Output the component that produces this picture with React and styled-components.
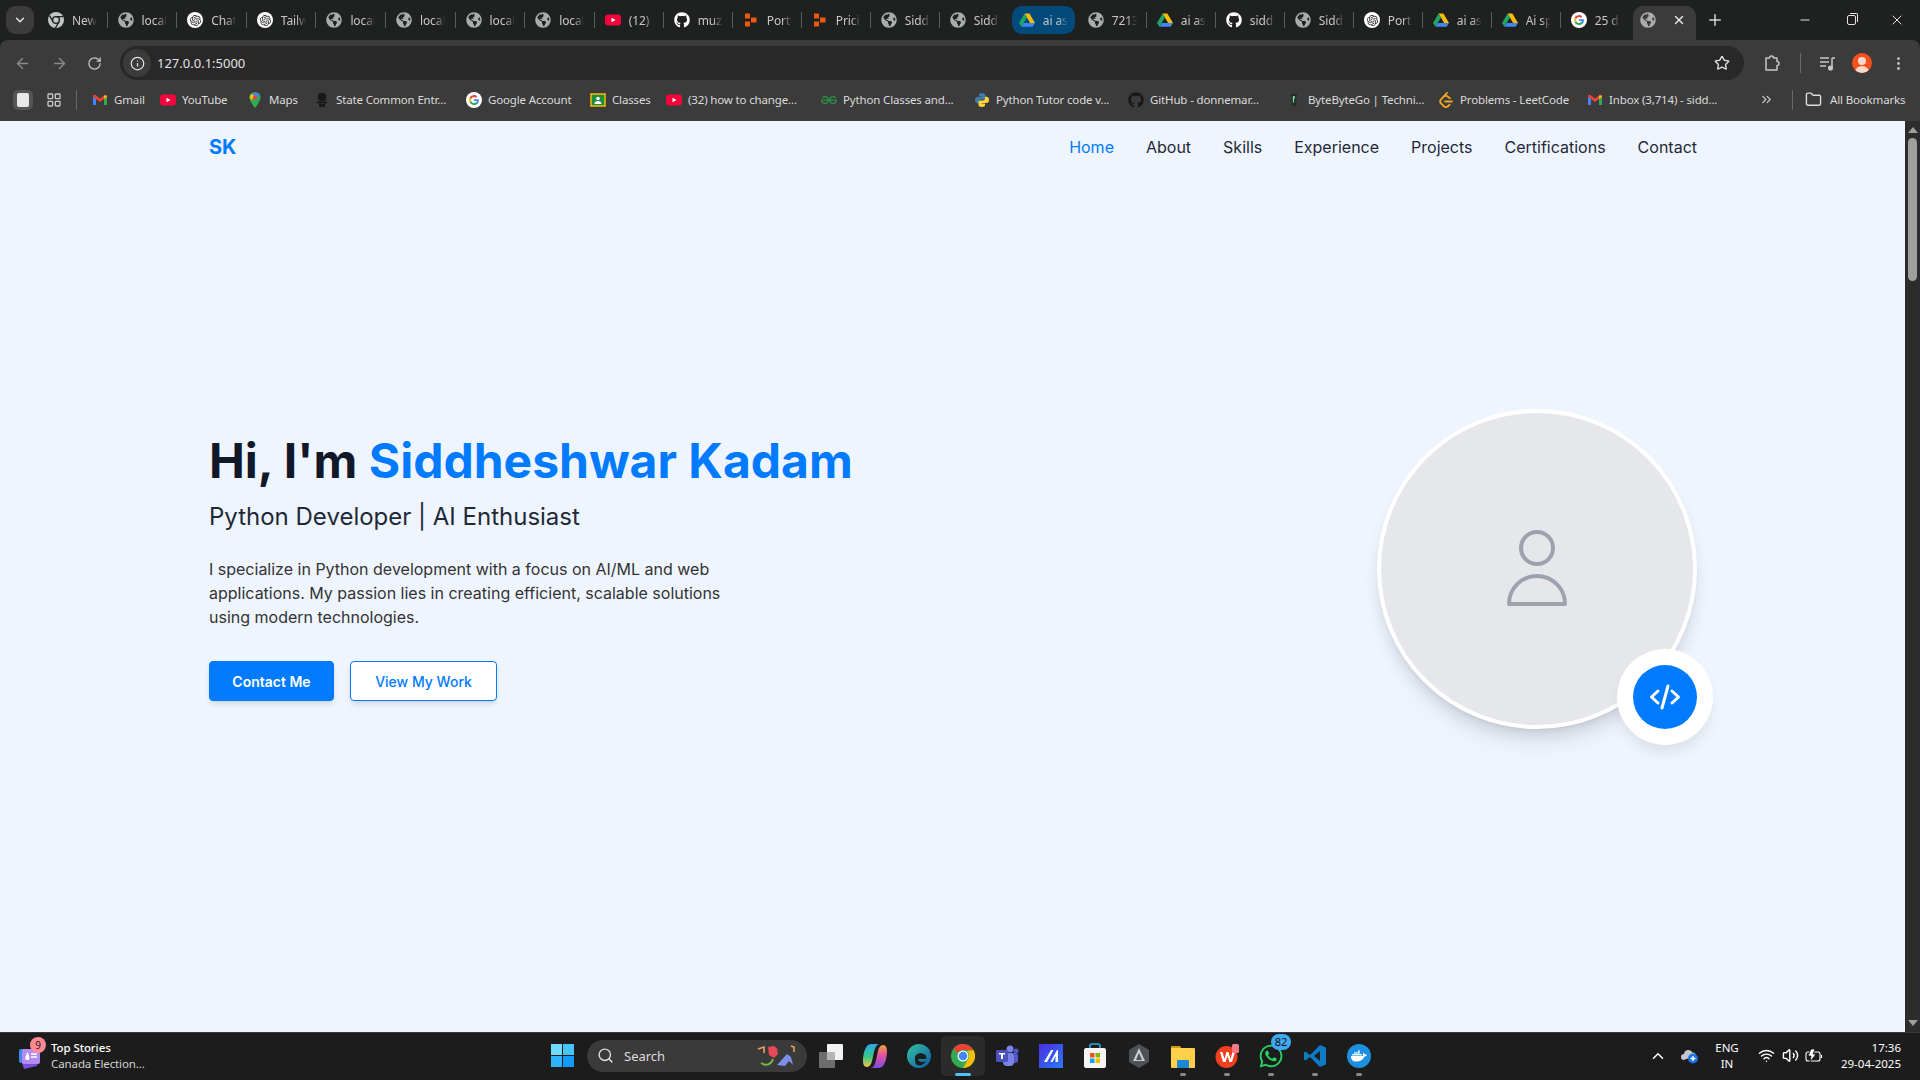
import React from "react";
import styled, { createGlobalStyle } from "styled-components";
import {
  ArrowLeft, ArrowRight, RotateCw, Info, Star, EllipsisVertical, ChevronDown, ChevronsRight,
  Folder, Plus, Minus, X, ChevronUp, Search, Wifi, Volume2, LayoutGrid,
} from "lucide-react";
import { FaGithub, FaGlobeAmericas, FaDocker, FaWhatsapp } from "react-icons/fa";
import { SiOpenai, SiLeetcode, SiGeeksforgeeks } from "react-icons/si";

const Global = createGlobalStyle`
  html, body { margin: 0; padding: 0; height: 100%; overflow: hidden; background: #1c1c1c; }
  * { box-sizing: border-box; }
  #root { height: 100%; }
`;

const UI = `"Noto Sans", "Open Sans", sans-serif`;
const WEB = `Inter, "Liberation Sans", sans-serif`;

/* ---------- favicons & logos ---------- */
const GlobeIcon = ({ s = 16 }) => <FaGlobeAmericas size={s} color="#a9abad" />;
const ChromeMono = () => (
  <svg width="16" height="16" viewBox="0 0 16 16">
    <circle cx="8" cy="8" r="8" fill="#c4c7c5" />
    <circle cx="8" cy="8" r="3.4" fill="#c4c7c5" stroke="#1f2020" strokeWidth="1.4" />
    <path d="M8 4.6h7M5 9.8 1.6 3.6M11 9.8 7.4 15.8" stroke="#1f2020" strokeWidth="1.3" />
  </svg>
);
const ChatIcon = () => (
  <svg width="16" height="16" viewBox="0 0 16 16">
    <circle cx="8" cy="8" r="8" fill="#fff" />
    <foreignObject x="2.5" y="2.5" width="11" height="11"><SiOpenai size={11} color="#222" /></foreignObject>
  </svg>
);
const YouTubeIcon = () => (
  <svg width="16" height="16" viewBox="0 0 16 16">
    <rect y="2.5" width="16" height="11" rx="3" fill="#f4043b" />
    <path d="M6.5 5.7 10.5 8l-4 2.3z" fill="#fff" />
  </svg>
);
const GitIcon = () => <FaGithub size={16} color="#fff" />;
const PortIcon = () => (
  <svg width="16" height="16" viewBox="0 0 16 16" fill="#ee5a0a">
    <rect x="2" y="1.5" width="5" height="5" /><rect x="8" y="5.5" width="5.5" height="5" /><rect x="2" y="9.5" width="5" height="5" />
  </svg>
);
const DriveIcon = () => (
  <svg width="16" height="16" viewBox="0 0 16 16">
    <path d="M5.6 1.5h4.8L16 11h-4.9z" fill="#fbbc04" />
    <path d="M5.6 1.5 0 11l2.4 3.8L8 5.5z" fill="#1fa463" />
    <path d="M4.8 11H16l-2.4 3.8H2.4z" fill="#4285f4" />
  </svg>
);
const GoogleIcon = () => (
  <svg width="16" height="16" viewBox="0 0 16 16">
    <circle cx="8" cy="8" r="8" fill="#fff" />
    <path d="M12.9 8.2c0-.4 0-.7-.1-1H8v1.9h2.8c-.1.7-.5 1.2-1 1.6l1.6 1.2c.9-.9 1.5-2.1 1.5-3.7z" fill="#4285f4" />
    <path d="M8 13c1.4 0 2.5-.5 3.4-1.3l-1.6-1.2c-.5.3-1 .5-1.8.5-1.3 0-2.4-.9-2.8-2.1L3.5 10.1C4.3 11.8 6 13 8 13z" fill="#34a853" />
    <path d="M5.2 8.9a3 3 0 0 1 0-1.9L3.5 5.8a5 5 0 0 0 0 4.3z" fill="#fbbc04" />
    <path d="M8 5c.8 0 1.4.3 1.9.8l1.4-1.4A5 5 0 0 0 3.5 5.8L5.2 7C5.6 5.8 6.7 5 8 5z" fill="#ea4335" />
  </svg>
);
const GmailIcon = () => (
  <svg width="16" height="16" viewBox="0 0 16 16">
    <path d="M1 4v9h3V7z" fill="#4285f4" /><path d="M15 4v9h-3V7z" fill="#34a853" />
    <path d="M1 4.5C1 3 2.6 2.4 3.7 3.2L8 6.5l4.3-3.3C13.4 2.4 15 3 15 4.5L12 7 8 10 4 7z" fill="#ea4335" />
    <path d="M12 3.4 15 3.8V5l-3 2z" fill="#fbbc04" />
  </svg>
);
const MapsIcon = () => (
  <svg width="16" height="16" viewBox="0 0 16 16">
    <path d="M8 0a5.5 5.5 0 0 0-5.5 5.5C2.5 9.5 8 16 8 16s5.500-6.500 5.500-10.500A5.500 5.500 0 0 0 8 0z" fill="#34a853" />
    <path d="M12.800 2.800 8 8 4 3a5.500 5.500 0 0 1 8.800-.2z" fill="#4285f4" />
    <path d="M4 1.800 2.500 5.500 4.500 8 8 4z" fill="#fbbc04" />
    <circle cx="8" cy="5.500" r="2" fill="#ea4335" />
  </svg>
);
const EmblemIcon = () => (
  <svg width="16" height="16" viewBox="0 0 16 16" fill="#17181a">
    <rect x="4" y="1" width="8" height="8" rx="3" /><rect x="3" y="9.500" width="10" height="2" /><rect x="5" y="12" width="6" height="3" />
  </svg>
);
const ClassroomIcon = () => (
  <svg width="16" height="16" viewBox="0 0 16 16">
    <rect x="1" y="2" width="14" height="12" fill="#1e8e3e" stroke="#fbbc04" strokeWidth="1.500" />
    <circle cx="8" cy="6.500" r="1.800" fill="#fff" /><path d="M4.500 12c0-2 1.500-3 3.500-3s3.500 1 3.500 3z" fill="#fff" />
  </svg>
);
const PythonIcon = () => (
  <svg width="16" height="16" viewBox="0 0 16 16">
    <path d="M8 1C5.500 1 5 2 5 3v1.500h3.200V5H3.500C2 5 1 6 1 8s1 3.200 2.400 3.200H5V9.500C5 8.300 6 7.500 7 7.500h3c1 0 1.500-.7 1.500-1.500V3c0-1-1.200-2-3.500-2z" fill="#3f7cad" />
    <path d="M8 15c2.500 0 3-1 3-2v-1.500H7.800V11h4.700C14 11 15 10 15 8s-1-3.200-2.400-3.200H11v1.700c0 1.200-1 2-2 2H6c-1 0-1.500.7-1.500 1.500v3c0 1 1.200 2 3.500 2z" fill="#ffd43b" />
  </svg>
);
const GfgIcon = () => <SiGeeksforgeeks size={16} color="#2f8d46" />;
const GhDark = () => <FaGithub size={16} color="#17181a" />;
const ByteIcon = () => (
  <svg width="16" height="16" viewBox="0 0 16 16">
    <path d="M5 2h6l-1 12H6z" fill="#21302c" /><path d="M7 4c2-.5 2.500 1 1.500 2.500S8.500 10 7.800 11 6.500 6 7 4z" fill="#7ee0a8" />
  </svg>
);
const LeetIcon = () => <SiLeetcode size={16} color="#f5a623" />;

const favicons = {
  chrome: ChromeMono, globe: GlobeIcon, chat: ChatIcon, yt: YouTubeIcon, gh: GitIcon, port: PortIcon, drive: DriveIcon, google: GoogleIcon,
};

/* ---------- browser chrome ---------- */
const Screen = styled.div`
  width: 1920px; height: 1080px; display: flex; flex-direction: column; overflow: hidden; font-family: ${UI};
`;
const TabStrip = styled.div`
  height: 40px; flex: none; background: #1f2020; display: flex; align-items: flex-start; position: relative;
`;
const TabMenu = styled.div`
  width: 28px; height: 28px; margin: 6px 4px 0 6px; flex: none; border-radius: 9px; background: #3b3b3b; color: #e3e3e3;
  display: flex; align-items: center; justify-content: center;
`;
const Tab = styled.div`
  width: ${(p) => p.$w}px; height: 28px; margin-top: 6px; flex: none; padding-left: 10px;
  display: flex; align-items: center; gap: 8px; position: relative; color: #c7c7c7; font-size: 12px; letter-spacing: -.1px;
  &::after {
    content: ""; position: absolute; right: 0; top: 6px; height: 16px; width: 1px;
    background: ${(p) => (p.$sep ? "#5b5c5d" : "transparent")};
  }
`;
const GroupTab = styled.div`
  width: 63px; height: 28px; margin: 6px 3px 0; flex: none; padding-left: 7px; display: flex; align-items: center; gap: 8px;
  color: #c7c7c7; font-size: 12px; letter-spacing: -.1px; background: #024a7a; border-radius: 10px;
`;
const CurrentTab = styled.div`
  width: 63px; height: 34px; margin: 6px 3px 0; flex: none; padding: 0 0 6px 7px; display: flex; align-items: center;
  background: #3b3b3b; border-radius: 10px 10px 0 0;
`;
const TabIcon = styled.span`
  width: 16px; height: 16px; flex: none; display: flex; align-items: center; justify-content: center;
  & foreignObject svg { display: block; }
`;
const TabTitle = styled.span`
  width: 25px; overflow: hidden; white-space: nowrap; display: block;
  -webkit-mask-image: linear-gradient(90deg, #000 60%, transparent);
  mask-image: linear-gradient(90deg, #000 60%, transparent);
`;
const TabClose = styled.span`
  margin-left: 16px; display: flex; color: #e3e3e3;
`;
const NewTab = styled.div`
  width: 28px; height: 28px; margin: 6px 0 0 2px; display: flex; align-items: center; justify-content: center; color: #d6d6d6; flex: none;
`;
const WindowControls = styled.div`
  margin-left: auto; display: flex; height: 40px; align-items: center; color: #e3e3e3;
`;
const WinButton = styled.div`
  width: 46px; height: 40px; display: flex; align-items: center; justify-content: center;
`;
const RestoreGlyph = styled.span`
  width: 9px; height: 10px; border: 1px solid #e3e3e3; border-radius: 2px; position: relative; display: block;
  &::before { content: ""; position: absolute; top: -3px; right: -3px; width: 7px; height: 8px; border-top: 1px solid #e3e3e3; border-right: 1px solid #e3e3e3; border-radius: 0 2px 0 0; }
`;

const Toolbar = styled.div`
  height: 40px; flex: none; background: #3b3b3b; border-radius: 8px 8px 0 0; display: flex; align-items: center; color: #c7c7c7; padding-top: 6px;
`;
const NavIcon = styled.div`
  width: ${(p) => p.$w}px; flex: none; display: flex; justify-content: center; color: ${(p) => (p.$dim ? "#8a8a8a" : "#c7c7c7")};
`;
const AddressBar = styled.div`
  width: 1624px; height: 34px; flex: none; margin: 0 0 0 6px; border-radius: 17px; background: #282828; display: flex; align-items: center; padding-left: 3px; color: #e3e3e3; font-size: 13px;
`;
const InfoChip = styled.div`
  width: 28px; height: 28px; border-radius: 50%; background: #3b3b3b; display: flex; align-items: center; justify-content: center; margin-right: 6px;
`;
const StarSlot = styled.div`
  margin-left: auto; margin-right: 14px; display: flex;
`;
const ToolSep = styled.div`
  width: 1px; height: 20px; background: #6a6a6a; flex: none;
`;
const Avatar = styled.div`
  width: 20px; height: 20px; border-radius: 50%; background: #f4511e; position: relative; overflow: hidden; flex: none;
  &::before { content: ""; position: absolute; left: 6px; top: 4px; width: 8px; height: 8px; border-radius: 50%; background: #ffd9c9; }
  &::after { content: ""; position: absolute; left: 3px; top: 13px; width: 14px; height: 12px; border-radius: 50%; background: #ffd9c9; }
`;

const BookmarkBar = styled.div`
  height: 41px; flex: none; background: #3b3b3b; display: flex; align-items: center; color: #dcdcdc; font-size: 11.5px; padding: 0 0 2px 13px; letter-spacing: -.15px;
`;
const PinSquare = styled.div`
  width: 20px; height: 20px; border-radius: 5px; background: #555; display: flex; align-items: center; justify-content: center; flex: none;
  &::before { content: ""; width: 12px; height: 14px; border-radius: 2px; background: #e8e8e8; }
`;
const AppsSlot = styled.div`
  margin-left: 13px; width: 16px; display: flex; color: #c7c7c7; flex: none;
`;
const BarSep = styled.div`
  width: 1px; height: 20px; background: #666; flex: none; margin: ${(p) => p.$m || "0 15px 0 14px"};
`;
const Bookmark = styled.div`
  width: ${(p) => p.$w}px; flex: none; display: flex; align-items: center; gap: ${(p) => p.$gap || 6}px; white-space: nowrap; overflow: hidden;
`;

/* ---------- page ---------- */
const Viewport = styled.div`
  height: 911px; flex: none; display: flex;
`;
const Page = styled.main`
  flex: 1; min-width: 0; background: #eff5ff; color: #1f2937; font-family: ${WEB}; display: flex; flex-direction: column;
`;
const Header = styled.header`
  height: 52px; flex: none; display: flex; align-items: center; justify-content: space-between; padding: 0 208px 0 209px;
`;
const Logo = styled.div`
  font-size: 20px; font-weight: 700; color: #007bff;
`;
const NavList = styled.nav`
  display: flex; gap: 32px; font-size: 16px; font-weight: 400;
`;
const NavLink = styled.a`
  color: ${(p) => (p.$active ? "#007bff" : "#1f2937")};
`;
const Hero = styled.section`
  flex: 1; display: flex; align-items: flex-start; justify-content: space-between; padding: 236px 208px 0 209px;
`;
const HeroText = styled.div`
  padding-top: 23px; display: flex; flex-direction: column;
`;
const Title = styled.h1`
  margin: 0 0 11px; font-size: 48px; line-height: 58px; font-weight: 700; color: #111827;
`;
const Accent = styled.span`
  color: #007bff;
`;
const Subtitle = styled.h2`
  margin: 0 0 24px; font-size: 24px; line-height: 32px; font-weight: 400; color: #1f2937;
`;
const Lead = styled.p`
  margin: 0 0 32px; width: 540px; font-size: 16px; line-height: 24px; color: #333;
`;
const Actions = styled.div`
  display: flex; gap: 16px;
`;
const Button = styled.a`
  height: 40px; width: ${(p) => p.$w}px; display: flex; align-items: center; justify-content: center; border-radius: 4px; font-size: 14px;
  font-weight: ${(p) => (p.$primary ? 600 : 500)};
  color: ${(p) => (p.$primary ? "#fff" : "#007bff")};
  background: ${(p) => (p.$primary ? "#007bff" : "#fff")};
  border: 1px solid #007bff;
  box-shadow: 0 4px 6px -1px rgba(0,0,0,.1), 0 2px 4px -2px rgba(0,0,0,.1);
`;
const Portrait = styled.div`
  width: 320px; height: 320px; flex: none; position: relative; border-radius: 50%; background: #e5e7eb; border: 4px solid #fff;
  box-shadow: 0 10px 15px -3px rgba(0,0,0,.1), 0 4px 6px -4px rgba(0,0,0,.1), 0 20px 25px -5px rgba(0,0,0,.06);
  display: flex; align-items: center; justify-content: center;
`;
const Badge = styled.div`
  position: absolute; right: -4px; bottom: -4px; width: 64px; height: 64px; border-radius: 50%; background: #007bff;
  box-shadow: 0 0 0 16px #fff, 0 10px 15px 12px rgba(0,0,0,.1);
  display: flex; align-items: center; justify-content: center;
`;

const ScrollRail = styled.div`
  width: 15px; flex: none; background: #2c2c2c; display: flex; flex-direction: column; align-items: center; padding-top: 6px; position: relative;
`;
const ScrollUp = styled.div`
  width: 0; height: 0; border-left: 5px solid transparent; border-right: 5px solid transparent; border-bottom: 6px solid #9f9f9f; margin-bottom: 5px;
`;
const ScrollThumb = styled.div`
  width: 9px; height: 143px; border-radius: 5px; background: #9f9f9f;
`;
const ScrollDown = styled.div`
  margin-top: auto; margin-bottom: 6px; width: 0; height: 0; border-left: 5px solid transparent; border-right: 5px solid transparent; border-top: 6px solid #9f9f9f;
`;

/* ---------- taskbar ---------- */
const Taskbar = styled.footer`
  flex: 1; background: #1c1c1c; border-top: 1px solid #3a3a3a; display: flex; align-items: center; position: relative; color: #fff; font-size: 12px; padding-bottom: 2px;
`;
const Widget = styled.div`
  width: 551px; flex: none; display: flex; align-items: center; padding-left: 19px; gap: 11px; position: relative;
`;
const WidgetBadge = styled.span`
  position: absolute; left: 30px; top: -3px; width: 16px; height: 16px; border-radius: 50%; background: #ff8a94; color: #1c1c1c;
  font-size: 10px; display: flex; align-items: center; justify-content: center;
`;
const WidgetText = styled.div`
  display: flex; flex-direction: column; font-size: 11.5px; line-height: 16px; letter-spacing: -.1px;
`;
const WidgetHead = styled.span`
  font-weight: 500;
`;
const WidgetSub = styled.span`
  color: #d4d4d4;
`;
const StartGrid = styled.div`
  width: 23px; height: 23px; flex: none; display: grid; grid-template-columns: 1fr 1fr; gap: 1px;
`;
const StartPane = styled.span`
  background: ${(p) => p.$c};
`;
const SearchPill = styled.div`
  width: 220px; height: 32px; margin-left: 13px; flex: none; border-radius: 16px; background: #3a3a3a; display: flex; align-items: center; padding-left: 10px; gap: 10px; color: #dcdcdc; font-size: 13px; position: relative;
`;
const SearchArt = styled.div`
  position: absolute; right: 8px; top: 5px; display: flex;
`;
const TaskIcons = styled.div`
  display: flex; margin-left: 2px; flex: none;
`;
const TaskSlot = styled.div`
  width: 44px; height: 40px; display: flex; align-items: center; justify-content: center; position: relative; flex: none;
  border-radius: 5px;
  background: ${(p) => (p.$active ? "#2b2b2b" : "transparent")};
  &::after {
    content: ""; position: absolute; bottom: 0; left: 50%; transform: translateX(-50%); border-radius: 2px; height: 3px;
    width: ${(p) => (p.$active ? "16px" : p.$open ? "6px" : "0")};
    background: ${(p) => (p.$active ? "#4fc3f7" : "#8a8a8a")};
  }
`;
const CountBadge = styled.span`
  position: absolute; right: 2px; top: -2px; width: 20px; height: 16px; border-radius: 8px; background: #3fa9f5; color: #111; font-size: 11px; display: flex; align-items: center; justify-content: center;
`;
const Tray = styled.div`
  margin-left: auto; display: flex; align-items: center; padding-right: 19px; color: #fff;
`;
const TraySlot = styled.div`
  width: ${(p) => p.$w}px; display: flex; justify-content: center; flex: none;
`;
const Lang = styled.div`
  display: flex; flex-direction: column; align-items: center; font-size: 11.5px; line-height: 16px; width: 40px; margin-right: 6px;
`;
const Clock = styled.div`
  display: flex; flex-direction: column; align-items: flex-end; font-size: 11.5px; line-height: 16px; margin-left: 4px; width: 70px;
`;

const tabs = [
  ["chrome", "New"], ["globe", "local"], ["chat", "Chat"], ["chat", "Tailw"], ["globe", "local"], ["globe", "local"], ["globe", "local"], ["globe", "local"],
  ["yt", "(12)"], ["gh", "muz"], ["port", "Port"], ["port", "Prici"], ["globe", "Sidd"], ["globe", "Sidd"], ["drive", "ai as", "group"], ["globe", "7213"],
  ["drive", "ai as"], ["gh", "sidd"], ["globe", "Sidd"], ["chat", "Port"], ["drive", "ai as"], ["drive", "Ai sp"], ["google", "25 d"],
];

const bookmarks = [
  [GmailIcon, "Gmail", 68], [YouTubeIcon, "YouTube", 87], [MapsIcon, "Maps", 67], [EmblemIcon, "State Common Entr...", 152],
  [GoogleIcon, "Google Account", 124], [ClassroomIcon, "Classes", 76], [YouTubeIcon, "(32) how to change...", 155],
  [GfgIcon, "Python Classes and...", 153], [PythonIcon, "Python Tutor code v...", 154], [GhDark, "GitHub - donnemar...", 158],
  [ByteIcon, "ByteByteGo | Techni...", 152], [LeetIcon, "Problems - LeetCode", 149], [GmailIcon, "Inbox (3,714) - sidd...", 165],
];

const TaskView = () => (
  <svg width="26" height="26" viewBox="0 0 26 26">
    <rect x="1" y="9" width="16" height="16" rx="1" fill="#6d6d6d" /><rect x="9" y="1" width="16" height="16" rx="1" fill="#f2f2f2" /><rect x="9" y="9" width="8" height="8" fill="#b5b5b5" />
  </svg>
);
const Copilot = () => (
  <svg width="24" height="26" viewBox="0 0 24 26">
    <defs>
      <linearGradient id="cpa" x1="0" y1="0" x2="0" y2="1"><stop offset="0" stopColor="#2fa4f0" /><stop offset=".55" stopColor="#37c98a" /><stop offset="1" stopColor="#f5c542" /></linearGradient>
      <linearGradient id="cpb" x1="0" y1="0" x2="0" y2="1"><stop offset="0" stopColor="#f0a53a" /><stop offset=".45" stopColor="#e64fa3" /><stop offset="1" stopColor="#7a4fe0" /></linearGradient>
    </defs>
    <path d="M8 1h8c-3 1-4 4-5 8l-2 9c-.7 3-2.500 6-5 6-3 0-4-3-4-6 0-6 2-17 8-17z" fill="url(#cpa)" />
    <path d="M16 25H8c3-1 4-4 5-8l2-9c.7-3 2.500-6 5-6 3 0 4 3 4 6 0 6-2 17-8 17z" fill="url(#cpb)" />
  </svg>
);
const Edge = () => (
  <svg width="24" height="24" viewBox="0 0 24 24">
    <defs><linearGradient id="ed" x1="0" y1="0" x2="1" y2="1"><stop offset="0" stopColor="#35c1a0" /><stop offset="1" stopColor="#0c59a4" /></linearGradient></defs>
    <circle cx="12" cy="12" r="12" fill="url(#ed)" /><path d="M8 14c0-4 5-6 9-4 2 1 3 3 2 5h-8c.5 3 5 4 8 2-2 4-7 6-10 3-1-2-1-4-1-6z" fill="#1c1c1c" />
  </svg>
);
const Chrome = () => (
  <svg width="24" height="24" viewBox="0 0 24 24">
    <circle cx="12" cy="12" r="12" fill="#34a853" />
    <path d="M12 0a12 12 0 0 1 10.4 6H12a6 6 0 0 0-5.300 3.200L2.500 4.500A12 12 0 0 1 12 0z" fill="#ea4335" />
    <path d="M22.400 6A12 12 0 0 1 12 24l5.200-9A6 6 0 0 0 16 7z" fill="#fbbc04" />
    <circle cx="12" cy="12" r="5.500" fill="#fff" /><circle cx="12" cy="12" r="4.300" fill="#4285f4" />
  </svg>
);
const Teams = () => (
  <svg width="24" height="24" viewBox="0 0 24 24">
    <circle cx="15" cy="5" r="3.500" fill="#7b83eb" /><circle cx="21" cy="7" r="2.500" fill="#5059c9" /><rect x="11" y="9" width="12" height="10" rx="3" fill="#5059c9" /><rect x="8" y="9" width="11" height="13" rx="4" fill="#7b83eb" />
    <rect x="1" y="6" width="12" height="12" rx="1.500" fill="#4b53bc" /><path d="M4 9h6v1.500H8V15H6v-4.500H4z" fill="#fff" />
  </svg>
);
const AppTile = () => (
  <svg width="24" height="24" viewBox="0 0 24 24">
    <defs><linearGradient id="tl" x1="0" y1="0" x2="1" y2="1"><stop offset="0" stopColor="#4a2ee0" /><stop offset="1" stopColor="#2a7af5" /></linearGradient></defs>
    <rect width="24" height="24" fill="url(#tl)" /><path d="M5 18 12 6h2.500L8 18zM11.500 18 18 6h1v12h-2.500v-6L13.500 18z" fill="#fff" />
  </svg>
);
const Store = () => (
  <svg width="24" height="26" viewBox="0 0 24 26">
    <path d="M7 6V3a2 2 0 0 1 2-2h6a2 2 0 0 1 2 2v3" fill="none" stroke="#28a8ea" strokeWidth="1.600" />
    <rect x="1" y="5" width="22" height="20" rx="2" fill="#f4f4f4" />
    <rect x="7" y="10" width="4.500" height="4.500" fill="#f25022" /><rect x="12.500" y="10" width="4.500" height="4.500" fill="#7fba00" /><rect x="7" y="15.500" width="4.500" height="4.500" fill="#00a4ef" /><rect x="12.500" y="15.500" width="4.500" height="4.500" fill="#ffb900" />
  </svg>
);
const HexApp = () => (
  <svg width="22" height="24" viewBox="0 0 22 24">
    <path d="M11 0 21 6v12L11 24 1 18V6z" fill="#4d5257" /><path d="M11 4 17 17H5z" fill="#c8ccd0" /><path d="M11 9 14 16H8z" fill="#4d5257" />
  </svg>
);
const Files = () => (
  <svg width="24" height="24" viewBox="0 0 24 24">
    <path d="M0 2h9l2 3H0z" fill="#d19a12" /><rect y="4" width="24" height="20" rx="1" fill="#ffd04a" /><rect x="6" y="16" width="12" height="8" rx="1" fill="#1b87d6" />
  </svg>
);
const Wps = () => (
  <svg width="24" height="24" viewBox="0 0 24 24">
    <circle cx="11.500" cy="13" r="11" fill="#f0401f" /><path d="M5 8h2.500l2 7 2-7h2l2 7 2-7H20l-3 10h-2.500l-2-6-2 6H8z" fill="#fff" />
    <rect x="17" y="0" width="7" height="9" rx="1.500" fill="#f47a8a" />
  </svg>
);
const VSCode = () => (
  <svg width="24" height="24" viewBox="0 0 24 24">
    <path d="M17 1 7 11 2.500 7.500 1 8.500v7L2.500 16.500 7 13l10 10 6-2.500v-17zM17 7v10l-6-5z" fill="#0a7cc4" />
  </svg>
);
const Onedrive = () => (
  <svg width="18" height="16" viewBox="0 0 18 16">
    <path d="M3 12a3 3 0 0 1 0-6 4.500 4.500 0 0 1 8.500-1.500A3.500 3.500 0 0 1 15 8v2H8z" fill="#c4c8cc" /><circle cx="12" cy="10.500" r="5" fill="#1a73e8" /><path d="M9.500 10.500h5M12 8v5" stroke="#fff" strokeWidth="1.500" />
  </svg>
);
const Battery = () => (
  <svg width="18" height="16" viewBox="0 0 18 16" fill="none" stroke="#fff" strokeWidth="1.100">
    <rect x="1" y="4" width="14" height="9" rx="2" /><path d="M16.500 7v3" /><path d="M6 1 3 8h3l-1 6 6-8H8l2-5z" fill="#fff" stroke="#1c1c1c" strokeWidth=".8" />
  </svg>
);
const NewsIcon = () => (
  <svg width="21" height="26" viewBox="0 0 21 26">
    <path d="M3 20 19 17l-1 6-13 3z" fill="#7a4ed8" /><rect x="0" y="6" width="7" height="14" rx="2" fill="#3f8ae8" /><rect x="3" y="6" width="18" height="15" rx="2" fill="#b18cf2" />
    <path d="M7 17c-2-3 1-5 1-8 2 2 3 4 2 8z" fill="#fff" /><path d="M12 11h6M12 14h6" stroke="#fff" strokeWidth="1.300" />
  </svg>
);
const FlowerArt = () => (
  <svg width="42" height="22" viewBox="0 0 42 22">
    <path d="M4 18c5 3 10 2 12-4" fill="none" stroke="#79b94a" strokeWidth="2" /><path d="M11 2 17 1l3 2 1 6-4 4-5-3z" fill="#e8485a" />
    <path d="M1 4 7 2v6" fill="none" stroke="#e9a05a" strokeWidth="1.600" /><path d="M34 1l3 1v5" fill="none" stroke="#e9a05a" strokeWidth="1.600" />
    <path d="M20 20 30 9l4 3 2 8-4-4-4 5z" fill="#7d8fe8" />
  </svg>
);
const DockerBadge = () => (
  <svg width="24" height="24" viewBox="0 0 24 24"><circle cx="12" cy="12" r="12" fill="#1d8fe0" /><foreignObject x="4" y="4" width="16" height="16"><FaDocker size={16} color="#fff" /></foreignObject></svg>
);
const WhatsApp = () => <FaWhatsapp size={26} color="#25d366" />;

const taskApps = [
  [TaskView], [Copilot], [Edge], [Chrome, "active"], [Teams], [AppTile], [Store], [HexApp], [Files, "open"], [Wps, "open"],
  [WhatsApp, "open", "82"], [VSCode, "open"], [DockerBadge, "open"],
];

const UserGlyph = () => (
  <svg width="64" height="80" viewBox="0 0 64 80" fill="none" stroke="#9ca3af" strokeWidth="4" strokeLinejoin="round">
    <circle cx="32" cy="19" r="16" /><path d="M4 75a28 28 0 0 1 56 0z" />
  </svg>
);
const CodeGlyph = () => (
  <svg width="32" height="26" viewBox="0 0 32 26" fill="none" stroke="#fff" strokeWidth="3" strokeLinecap="round" strokeLinejoin="round">
    <path d="M9 7 2.500 13 9 19M23 7l6.500 6L23 19M19 2l-6 22" />
  </svg>
);
const MediaGlyph = () => (
  <svg width="17" height="17" viewBox="0 0 17 17" fill="none" stroke="#c7c7c7" strokeWidth="1.500">
    <path d="M1 3h9M1 7h9M1 11h6M13 3v10" /><circle cx="11.500" cy="13" r="1.800" fill="#c7c7c7" /><path d="M13 3h3" />
  </svg>
);
const ExtensionGlyph = () => (
  <svg width="18" height="18" viewBox="0 0 18 18" fill="none" stroke="#c7c7c7" strokeWidth="1.500" strokeLinejoin="round">
    <path d="M3 4h3.500a2 2 0 0 1 4 0H14v3.500a2 2 0 0 1 0 4V16H3z" />
  </svg>
);

export default function App() {
  return (
    <Screen>
      <Global />
      <TabStrip>
        <TabMenu><ChevronDown size={14} strokeWidth={2.5} /></TabMenu>
        {tabs.map(([icon, title, kind], i) => {
          const Icon = favicons[icon];
          if (kind === "group") {
            return <GroupTab key={i}><TabIcon><Icon /></TabIcon><TabTitle>{title}</TabTitle></GroupTab>;
          }
          const next = tabs[i + 1];
          const sep = next && next[2] !== "group";
          return (
            <Tab key={i} $w={i < 8 ? 69.6 : 69} $sep={sep}>
              <TabIcon><Icon /></TabIcon>
              <TabTitle>{title}</TabTitle>
            </Tab>
          );
        })}
        <CurrentTab>
          <TabIcon><GlobeIcon /></TabIcon>
          <TabClose><X size={14} strokeWidth={2.5} /></TabClose>
        </CurrentTab>
        <NewTab><Plus size={18} /></NewTab>
        <WindowControls>
          <WinButton><Minus size={14} /></WinButton>
          <WinButton><RestoreGlyph /></WinButton>
          <WinButton><X size={16} strokeWidth={1.5} /></WinButton>
        </WindowControls>
      </TabStrip>

      <Toolbar>
        <NavIcon $w={44} $dim><ArrowLeft size={17} /></NavIcon>
        <NavIcon $w={30} $dim><ArrowRight size={17} /></NavIcon>
        <NavIcon $w={40}><RotateCw size={15} /></NavIcon>
        <AddressBar>
          <InfoChip><Info size={15} /></InfoChip>
          127.0.0.1:5000
          <StarSlot><Star size={16} /></StarSlot>
        </AddressBar>
        <NavIcon $w={56}><ExtensionGlyph /></NavIcon>
        <ToolSep />
        <NavIcon $w={52}><MediaGlyph /></NavIcon>
        <NavIcon $w={18}><Avatar /></NavIcon>
        <NavIcon $w={54}><EllipsisVertical size={17} /></NavIcon>
      </Toolbar>

      <BookmarkBar>
        <PinSquare />
        <AppsSlot><LayoutGrid size={16} /></AppsSlot>
        <BarSep />
        {bookmarks.map(([Icon, label, w]) => (
          <Bookmark key={label} $w={w}><Icon />{label}</Bookmark>
        ))}
        <NavIcon $w={28}><ChevronsRight size={15} /></NavIcon>
        <BarSep $m="0 12px 0 12px" />
        <Bookmark $w={110} $gap={8}><Folder size={17} />All Bookmarks</Bookmark>
      </BookmarkBar>

      <Viewport>
        <Page>
          <Header>
            <Logo>SK</Logo>
            <NavList>
              <NavLink $active>Home</NavLink>
              <NavLink>About</NavLink>
              <NavLink>Skills</NavLink>
              <NavLink>Experience</NavLink>
              <NavLink>Projects</NavLink>
              <NavLink>Certifications</NavLink>
              <NavLink>Contact</NavLink>
            </NavList>
          </Header>
          <Hero>
            <HeroText>
              <Title>Hi, I'm <Accent>Siddheshwar Kadam</Accent></Title>
              <Subtitle>Python Developer | AI Enthusiast</Subtitle>
              <Lead>I specialize in Python development with a focus on AI/ML and web applications. My passion lies in creating efficient, scalable solutions using modern technologies.</Lead>
              <Actions>
                <Button $primary $w={125}>Contact Me</Button>
                <Button $w={147}>View My Work</Button>
              </Actions>
            </HeroText>
            <Portrait>
              <UserGlyph />
              <Badge><CodeGlyph /></Badge>
            </Portrait>
          </Hero>
        </Page>
        <ScrollRail>
          <ScrollUp />
          <ScrollThumb />
          <ScrollDown />
        </ScrollRail>
      </Viewport>

      <Taskbar>
        <Widget>
          <NewsIcon />
          <WidgetBadge>9</WidgetBadge>
          <WidgetText>
            <WidgetHead>Top Stories</WidgetHead>
            <WidgetSub>Canada Election...</WidgetSub>
          </WidgetText>
        </Widget>
        <StartGrid>
          <StartPane $c="#6fdcff" /><StartPane $c="#45c6fb" /><StartPane $c="#2eb4fa" /><StartPane $c="#129bfb" />
        </StartGrid>
        <SearchPill>
          <Search size={17} />
          Search
          <SearchArt><FlowerArt /></SearchArt>
        </SearchPill>
        <TaskIcons>
          {taskApps.map(([Icon, state, count], i) => (
            <TaskSlot key={i} $active={state === "active"} $open={state === "open"}>
              <Icon />
              {count && <CountBadge>{count}</CountBadge>}
            </TaskSlot>
          ))}
        </TaskIcons>
        <Tray>
          <TraySlot $w={30}><ChevronUp size={18} /></TraySlot>
          <TraySlot $w={34}><Onedrive /></TraySlot>
          <Lang><span>ENG</span><span>IN</span></Lang>
          <TraySlot $w={26}><Wifi size={17} /></TraySlot>
          <TraySlot $w={22}><Volume2 size={17} /></TraySlot>
          <TraySlot $w={26}><Battery /></TraySlot>
          <Clock><span>17:36</span><span>29-04-2025</span></Clock>
        </Tray>
      </Taskbar>
    </Screen>
  );
}
